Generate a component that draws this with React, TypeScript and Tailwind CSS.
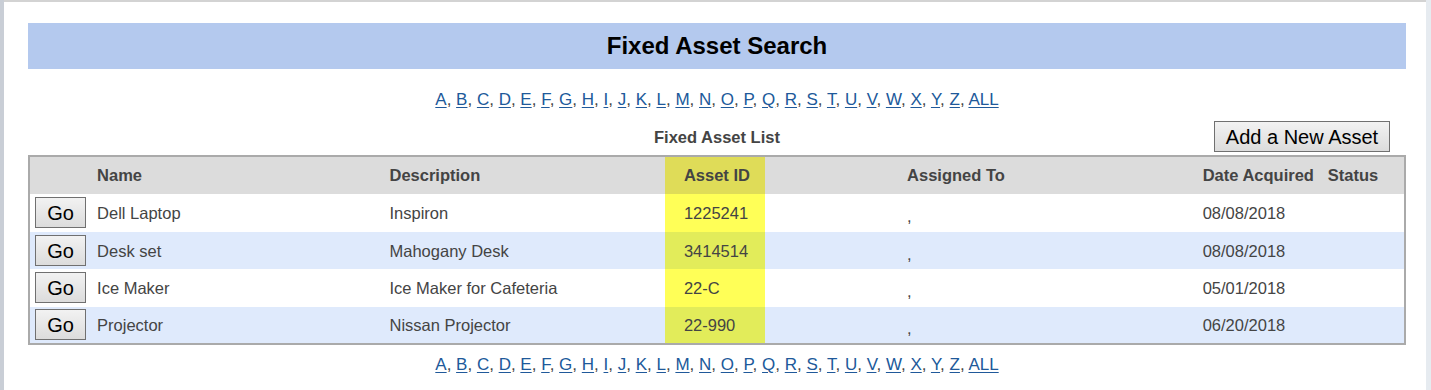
const letters = "ABCDEFGHIJKLMNOPQRSTUVWXYZ".split("").concat(["ALL"])

const assets = [
  { name: "Dell Laptop", description: "Inspiron", assetId: "1225241", date: "08/08/2018" },
  { name: "Desk set", description: "Mahogany Desk", assetId: "3414514", date: "08/08/2018" },
  { name: "Ice Maker", description: "Ice Maker for Cafeteria", assetId: "22-C", date: "05/01/2018" },
  { name: "Projector", description: "Nissan Projector", assetId: "22-990", date: "06/20/2018" },
]

function LetterLinks() {
  return (
    <div className="text-center text-[17px] leading-[20px] text-[#444]">
      {letters.map((l, i) => (
        <span key={l}>
          <a href="#" className="text-[#20599a] underline underline-offset-2">
            {l}
          </a>
          {i < letters.length - 1 ? ", " : ""}
        </span>
      ))}
    </div>
  )
}

export default function App() {
  return (
    <div
      className="flex h-[390px] bg-white text-[#444]"
      style={{ fontFamily: '"Liberation Sans", Arial, sans-serif' }}
    >
      <div className="w-[4px] bg-[#c9ced6]" />
      <div className="flex-1 border-t-2 border-[#d3d3d3] pl-[24px] pr-[20px]">
        <div className="mt-[21px] flex h-[46px] items-center justify-center bg-[#b4c9ee]">
          <h1 className="text-[24px] font-bold text-black">Fixed Asset Search</h1>
        </div>

        <div className="mt-[21px]">
          <LetterLinks />
        </div>

        <div className="mt-[11px] grid h-[31px] grid-cols-[1fr_auto_1fr] items-center">
          <div />
          <div className="pt-[2px] text-[16.5px] font-bold text-[#444]">Fixed Asset List</div>
          <div className="flex justify-end pr-[16px]">
            <button className="h-[31px] w-[176px] border border-[#707070] bg-gradient-to-b from-[#f2f2f2] to-[#dcdcdc] text-[20px] text-black">
              Add a New Asset
            </button>
          </div>
        </div>

        <table className="mt-[3px] w-full table-fixed border-collapse border-2 border-[#aaa] text-[16.5px]">
          <colgroup>
            <col className="w-[60px]" />
            <col className="w-[292px]" />
            <col className="w-[283px]" />
            <col className="w-[100px]" />
            <col className="w-[429px]" />
            <col className="w-[125px]" />
            <col className="w-[85px]" />
          </colgroup>
          <thead>
            <tr className="h-[38px] bg-[#dcdcdc] text-left font-bold text-[#444]">
              <th />
              <th className="pl-[8px]">Name</th>
              <th className="pl-[8px]">Description</th>
              <th className="bg-[#dfdc58] pl-[19px]">Asset ID</th>
              <th className="pl-[142px]">Assigned To</th>
              <th className="pl-[8px] whitespace-nowrap">Date Acquired</th>
              <th className="pl-[8px]">Status</th>
            </tr>
          </thead>
          <tbody>
            {assets.map((a, i) => {
              const alt = i % 2 === 1
              return (
                <tr key={a.assetId} className={`h-[37.5px] ${alt ? "bg-[#dfeafc]" : "bg-white"}`}>
                  <td className="pl-[5px]">
                    <button className="h-[31px] w-[51px] border border-[#707070] bg-gradient-to-b from-[#f2f2f2] to-[#dcdcdc] text-[20px] text-black">
                      Go
                    </button>
                  </td>
                  <td className="pl-[8px] pt-[2px]">{a.name}</td>
                  <td className="pl-[8px] pt-[2px]">{a.description}</td>
                  <td className={`pl-[19px] pt-[2px] ${alt ? "bg-[#e2ec5a]" : "bg-[#ffff57]"}`}>{a.assetId}</td>
                  <td className="pl-[142px] pt-[8px]">,</td>
                  <td className="pl-[8px] pt-[2px]">{a.date}</td>
                  <td className="pl-[8px]" />
                </tr>
              )
            })}
          </tbody>
        </table>

        <div className="mt-[10px]">
          <LetterLinks />
        </div>
      </div>
      <div className="w-[5px] bg-[#e6ebf0]" />
    </div>
  )
}
